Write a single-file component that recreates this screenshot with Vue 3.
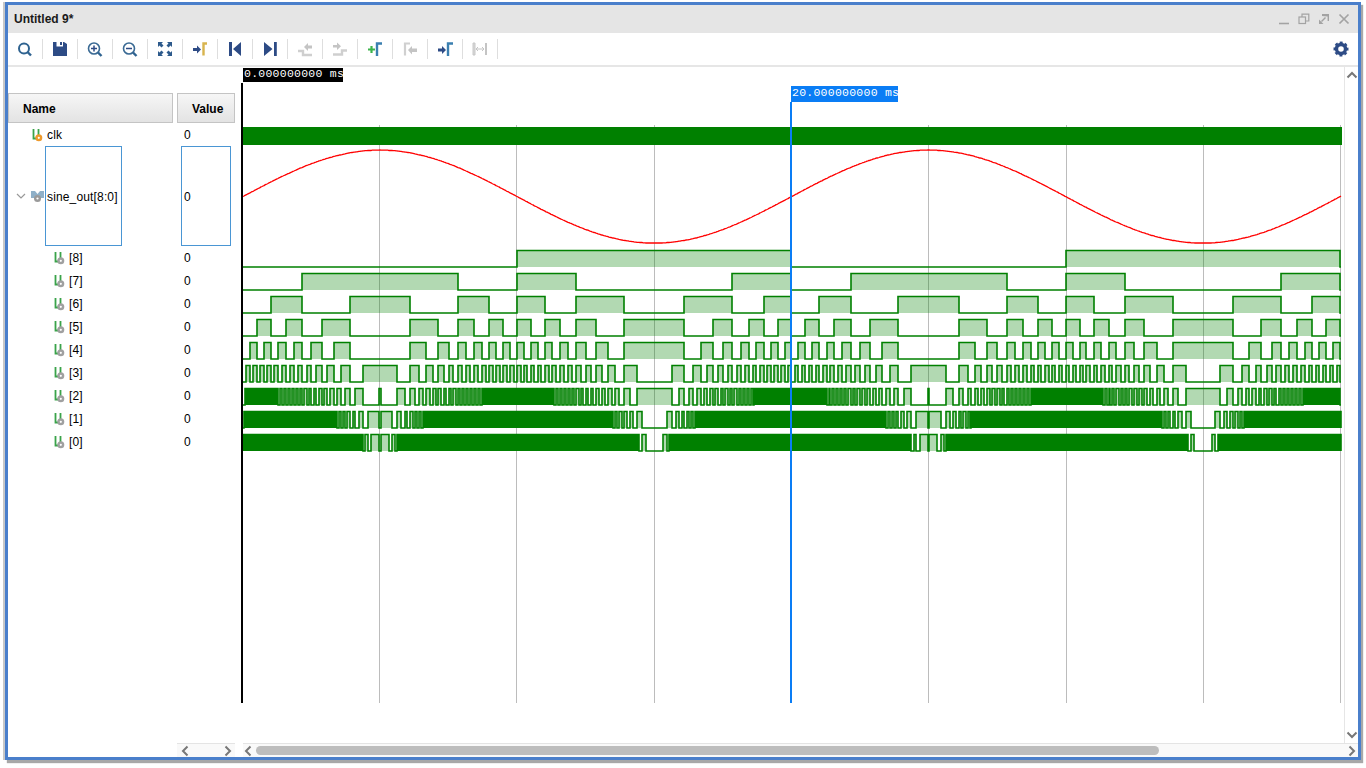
<script setup>
const X0 = 242.85
const XEND = 1341
const T = 548.6
const AMP = 204.01
const value = (x) => Math.max(-204, Math.floor(AMP * Math.sin((2 * Math.PI * (x - X0)) / T)))

const sinePoints = []
for (let x = 243; x <= XEND; x += 1) {
  sinePoints.push(`${x},${(196.5 - (value(x) / 204) * 46.5).toFixed(1)}`)
}
const sine = sinePoints.join(' ')

const bitIds = [8, 7, 6, 5, 4, 3, 2, 1, 0]

function intervals(bit) {
  const out = []
  let start = null
  for (let x = 243; x <= XEND; x += 0.02) {
    const on = ((value(x) >> bit) & 1) === 1
    if (on && start === null) start = x
    if (!on && start !== null) {
      out.push([start, x])
      start = null
    }
  }
  if (start !== null) out.push([start, XEND])
  return out
}

// Pulses narrower than the trace width fuse into a solid block, as the viewer draws them.
function merged(list, maxGap) {
  const runs = []
  for (const [a, b] of list) {
    const prev = runs[runs.length - 1]
    const narrow = b - a < 2.6 && prev && prev.lastWidth < 2.6
    if (prev && narrow && a - prev.b < maxGap) {
      prev.b = b
      prev.solid = true
      prev.lastWidth = b - a
    } else {
      runs.push({ a, b, solid: false, lastWidth: b - a })
    }
  }
  return runs
}

const traces = bitIds.map((bit, k) => {
  const top = 250.5 + 23 * k
  const bottom = 267 + 23 * k
  let line = `M243 ${bottom}`
  let fill = ''
  let solid = ''
  let cursor = 243
  for (const run of merged(intervals(bit), bit === 0 ? 2.1 : 1.85)) {
    const l = Math.max(Math.round(run.a), cursor)
    const r = Math.max(Math.round(run.b), l + 1)
    cursor = r
    line += `H${l}V${top}H${r}V${bottom}`
    const shape = `M${l} ${top}H${r}V${bottom}H${l}Z`
    if (run.solid) solid += shape
    else fill += shape
  }
  line += `H${XEND}`
  return { bit, line, fill, solid }
})

const gridLines = [379.5, 516.5, 654.5, 928.5, 1066.5, 1203.5, 1340.5]
const rows = bitIds.map((b) => `[${b}]`)
</script>

<template>
  <div class="screen">
    <div class="window">
      <header class="titlebar">
        <span class="title">Untitled 9*</span>
        <div class="winctl">
          <svg width="12" height="12" viewBox="0 0 12 12"><path d="M1 10.500h10" stroke="#a3a3a3" stroke-width="1.600" /></svg>
          <svg width="12" height="12" viewBox="0 0 12 12" fill="none" stroke="#a3a3a3" stroke-width="1.200"><rect x="1" y="4" width="6.500" height="6.500" /><path d="M4 4V1.200h6.800V8H7.500" /></svg>
          <svg width="12" height="12" viewBox="0 0 12 12" fill="#a3a3a3"><path d="M4 1h7v7L11 8 9.600 8V3.400L4 3z" /><path d="M1 11V6.500L5.500 11zM3 8l4-4 1 1-4 4z" /></svg>
          <svg width="12" height="12" viewBox="0 0 12 12"><path d="M1.500 1.500l9 9M10.500 1.500l-9 9" stroke="#a3a3a3" stroke-width="1.700" /></svg>
        </div>
      </header>

      <nav class="toolbar">
        <button class="tb"><svg viewBox="0 0 24 24"><circle cx="11" cy="11.500" r="5" fill="none" stroke="#2f6390" stroke-width="2" /><path d="M14.500 15l3.500 3.500" stroke="#2f6390" stroke-width="2.400" /></svg></button>
        <i class="sep"></i>
        <button class="tb"><svg viewBox="0 0 24 24"><path fill="#2d4b85" d="M5 5h3.500v4.500h6.500V5h1l3 2v12H5z" /><path fill="#2d4b85" d="M12 5h2v3h-2z" /></svg></button>
        <i class="sep"></i>
        <button class="tb"><svg viewBox="0 0 24 24"><circle cx="11" cy="11.500" r="5.500" fill="none" stroke="#3a6a94" stroke-width="1.600" /><path d="M15 15.500l3.500 3.500" stroke="#2f6390" stroke-width="2.400" /><path d="M8 11.500h6M11 8.500v6" stroke="#2d4b85" stroke-width="1.500" /></svg></button>
        <i class="sep"></i>
        <button class="tb"><svg viewBox="0 0 24 24"><circle cx="11" cy="11.500" r="5.500" fill="none" stroke="#3a6a94" stroke-width="1.600" /><path d="M15 15.500l3.500 3.500" stroke="#2f6390" stroke-width="2.400" /><path d="M8 11.500h6" stroke="#2d4b85" stroke-width="1.500" /></svg></button>
        <i class="sep"></i>
        <button class="tb"><svg viewBox="0 0 24 24" fill="#2d5a8c"><path d="M5 5h5L8.500 6.500l2 2-2 2-2-2L5 10zM19 5v5l-1.500-1.500-2 2-2-2 2-2L14 5zM5 19v-5l1.500 1.500 2-2 2 2-2 2L10 19zM19 19h-5l1.500-1.500-2-2 2-2 2 2L19 14z" /></svg></button>
        <i class="sep"></i>
        <button class="tb"><svg viewBox="0 0 24 24"><path fill="#2d4b85" d="M5 11h4V8.500l4 4-4 4V14H5z" /><path d="M15.500 18.500V6.500H19" fill="none" stroke="#d8b44e" stroke-width="2.400" /></svg></button>
        <i class="sep"></i>
        <button class="tb"><svg viewBox="0 0 24 24" fill="#2d4b85"><path d="M6 5h3v14H6zM18 5v14l-8-7z" /></svg></button>
        <i class="sep"></i>
        <button class="tb"><svg viewBox="0 0 24 24" fill="#2d4b85"><path d="M6 5l8.500 7L6 19zM16 5h2.800v14H16z" /></svg></button>
        <i class="sep"></i>
        <button class="tb"><svg viewBox="0 0 24 24"><path d="M5 14h5v4h9" fill="none" stroke="#cfcfcf" stroke-width="2.400" /><path d="M11 10l4-4v2.500h4v3h-4V14z" fill="#c4c4c4" /></svg></button>
        <i class="sep"></i>
        <button class="tb"><svg viewBox="0 0 24 24"><path d="M5 17.500h9v-4h5" fill="none" stroke="#cfcfcf" stroke-width="2.400" /><path d="M5 8h4V5.500l4 3.700-4 3.800V10.500H5z" fill="#c4c4c4" /></svg></button>
        <i class="sep"></i>
        <button class="tb"><svg viewBox="0 0 24 24"><path d="M5 12.500h7M8.500 9v7" stroke="#3cb44a" stroke-width="2.200" /><path d="M14 19V6.500h5" fill="none" stroke="#3a7fb0" stroke-width="2.400" /></svg></button>
        <i class="sep"></i>
        <button class="tb"><svg viewBox="0 0 24 24"><path d="M7 18.500V6.500h5" fill="none" stroke="#d0d0d0" stroke-width="2.200" /><path d="M10 13l4-4v2.500h5v3.500h-5v2.500z" fill="#c4c4c4" /></svg></button>
        <i class="sep"></i>
        <button class="tb"><svg viewBox="0 0 24 24"><path fill="#2d4b85" d="M5 11.500h4V9l4 4-4 4v-2.500H5z" /><path d="M15 19V6.500h5" fill="none" stroke="#3a7fb0" stroke-width="2.400" /></svg></button>
        <i class="sep"></i>
        <button class="tb"><svg viewBox="0 0 24 24"><path d="M5 6h2v12H5z" fill="#d8d8d8" stroke="#c8c8c8" /><path d="M17 6h2v12h-2z" fill="#c4c4c4" /><path d="M8 12h8M10 10l-2 2 2 2M14 10l2 2-2 2" fill="none" stroke="#c4c4c4" /></svg></button>
        <i class="sep"></i>
        <button class="tb gear"><svg viewBox="0 0 24 24"><circle cx="12" cy="12" r="4.500" fill="none" stroke="#2d4b85" stroke-width="3.400" /><circle cx="12" cy="12" r="6.600" fill="none" stroke="#2d4b85" stroke-width="1.800" stroke-dasharray="3 2.180" stroke-dashoffset="1.500" /></svg></button>
      </nav>

      <main class="main">
        <section class="left">
          <div class="heads">
            <div class="head name">Name</div>
            <div class="head val">Value</div>
          </div>
          <div class="row">
            <div class="namecell lvl1">
              <svg class="sig" viewBox="0 0 13 14"><path d="M1.500 1v9.500H4.500M6.500 1v6" fill="none" stroke="#3aa34a" stroke-width="1.800" /><circle cx="6.800" cy="9.800" r="3.500" fill="#ee9a2c" /><circle cx="6.800" cy="9.800" r="1.100" fill="#fff" /></svg>
              <span>clk</span>
            </div>
            <div class="valcell"><span>0</span></div>
          </div>
          <div class="row bus">
            <div class="namecell lvl0">
              <svg class="caret" viewBox="0 0 10 6"><path d="M1 1l4 4 4-4" fill="none" stroke="#999" stroke-width="1.200" /></svg>
              <svg class="sig" viewBox="0 0 13 14"><path d="M0 2h4l2.500 3L9 2h4v7H9L6.500 6 4 9H0z" fill="#8fb0c8" /><circle cx="6.500" cy="9.500" r="3.500" fill="#9a9a9a" /><circle cx="6.500" cy="9.500" r="1.100" fill="#fff" /></svg>
              <span class="box">sine_out[8:0]</span>
            </div>
            <div class="valcell"><span class="box vbox">0</span></div>
          </div>
          <div v-for="r in rows" :key="r" class="row">
            <div class="namecell lvl2">
              <svg class="sig" viewBox="0 0 13 14"><path d="M1.500 1v9.500H4.500M6.500 1v6" fill="none" stroke="#3aa34a" stroke-width="1.800" /><circle cx="6.800" cy="9.800" r="3.500" fill="#a0a0a0" /><circle cx="6.800" cy="9.800" r="1.100" fill="#fff" /></svg>
              <span>{{ r }}</span>
            </div>
            <div class="valcell"><span>0</span></div>
          </div>
        </section>

        <section class="wave">
          <svg class="plot" width="1103" height="676" viewBox="241 67 1103 676">
            <g stroke="#bcbcbc" stroke-width="1">
              <line v-for="g in gridLines" :key="g" :x1="g" :x2="g" y1="125" y2="703" />
            </g>
            <rect x="243" y="127" width="1099" height="18" fill="#008000" />
            <polyline :points="sine" fill="none" stroke="#ff0000" stroke-width="1.300" />
            <g v-for="t in traces" :key="t.bit">
              <path :d="t.fill" fill="#008000" fill-opacity="0.3" />
              <path :d="t.solid" fill="#008000" />
              <path :d="t.line" fill="none" stroke="#008000" stroke-width="1.600" />
            </g>
            <rect x="241" y="83" width="2" height="620" fill="#000" />
            <rect x="790" y="102" width="2" height="601" fill="#0a7df5" />
          </svg>
          <span class="stamp origin">0.000000000 ms</span>
          <span class="stamp cursor">20.000000000 ms</span>
        </section>

        <aside class="vscroll">
          <svg class="chev" viewBox="0 0 12 8"><path d="M1.500 6.500L6 2l4.500 4.500" /></svg>
          <svg class="chev" viewBox="0 0 12 8"><path d="M1.500 1.500L6 6l4.500-4.500" /></svg>
        </aside>
      </main>

      <footer class="hbar">
        <div class="hspacer"></div>
        <div class="hname">
          <svg class="chevh" viewBox="0 0 8 12"><path d="M6.500 1.500L2 6l4.500 4.500" /></svg>
          <svg class="chevh" viewBox="0 0 8 12"><path d="M1.500 1.500L6 6l-4.500 4.500" /></svg>
        </div>
        <div class="hgap"></div>
        <div class="hwave">
          <svg class="chevh" viewBox="0 0 8 12"><path d="M6.500 1.500L2 6l4.500 4.500" /></svg>
          <div class="track"><div class="thumb"></div></div>
          <svg class="chevh" viewBox="0 0 8 12"><path d="M1.500 1.500L6 6l-4.500 4.500" /></svg>
        </div>
      </footer>
    </div>
  </div>
</template>

<style scoped>
.screen {
  width: 1366px;
  height: 768px;
  box-sizing: border-box;
  padding: 2px 5px 8px 5px;
  background: #fff;
  overflow: hidden;
  font-family: "Liberation Sans", Arial, sans-serif;
  font-size: 12px;
  color: #000;
}
.window {
  height: 100%;
  box-sizing: border-box;
  border: 3px solid #4a7fcb;
  background: #fff;
  display: flex;
  flex-direction: column;
  box-shadow: 2px 3px 1px #a8a8a8, -2px 0 0 #c8c8c8;
}
.titlebar {
  height: 28px;
  flex: none;
  background: #e5e5e5;
  display: flex;
  align-items: center;
  justify-content: space-between;
  padding: 0 8px 0 6px;
  box-sizing: border-box;
}
.title {
  font-weight: bold;
  font-size: 12px;
  color: #1a1a1a;
}
.winctl {
  display: flex;
  gap: 8px;
}
.toolbar {
  height: 34px;
  flex: none;
  box-sizing: border-box;
  border-bottom: 2px solid #e6e6e6;
  display: flex;
  align-items: center;
}
.tb {
  width: 34px;
  height: 24px;
  padding: 0 5px;
  border: 0;
  background: none;
  display: block;
  box-sizing: border-box;
}
.tb svg {
  width: 24px;
  height: 24px;
  display: block;
}
.gear {
  margin-left: auto;
  margin-right: 0;
}
.sep {
  width: 1px;
  height: 20px;
  background: #dedede;
  flex: none;
}
.main {
  height: 676px;
  flex: none;
  display: flex;
}
.left {
  width: 233px;
  flex: none;
  padding-top: 26px;
  box-sizing: border-box;
}
.heads {
  display: flex;
  gap: 4px;
  height: 30px;
}
.head {
  box-sizing: border-box;
  border: 1px solid #c4c4c4;
  background: linear-gradient(#f6f6f6, #e3e3e3);
  font-weight: bold;
  display: flex;
  align-items: center;
  padding-top: 2px;
}
.name {
  width: 165px;
  padding-left: 14px;
}
.val {
  width: 58px;
  padding-left: 14px;
}
.row {
  height: 23px;
  display: flex;
  align-items: center;
  letter-spacing: 0.15px;
}
.row.bus {
  height: 100.500px;
}
.namecell {
  width: 169px;
  flex: none;
  height: 100%;
  display: flex;
  align-items: center;
  box-sizing: border-box;
}
.lvl0 {
  padding-left: 8px;
}
.lvl1 {
  padding-left: 24px;
}
.lvl2 {
  padding-left: 46px;
}
.sig {
  width: 13px;
  height: 14px;
  flex: none;
  margin-right: 2px;
}
.caret {
  width: 10px;
  height: 6px;
  margin-right: 5px;
  flex: none;
}
.lvl0 .sig {
  margin-right: 1px;
}
.valcell {
  padding-left: 7px;
  height: 100%;
  display: flex;
  align-items: center;
}
.box {
  height: 100px;
  box-sizing: border-box;
  border: 1px solid #4a96d4;
  display: flex;
  align-items: center;
  padding: 1px 0 0 1px;
  width: 77px;
}
.vbox {
  width: 50px;
  margin-left: -3px;
  padding-left: 2px;
}
.wave {
  flex: 1;
  position: relative;
  min-width: 0;
}
.plot {
  display: block;
}
.stamp {
  position: absolute;
  font-family: "Liberation Mono", monospace;
  font-size: 11.5px;
  letter-spacing: 0.25px;
  color: #fff;
  white-space: nowrap;
  padding: 0 1px;
  box-sizing: border-box;
}
.origin {
  left: 2px;
  top: 1px;
  width: 100px;
  height: 14px;
  line-height: 12px;
  background: #000;
}
.cursor {
  left: 550px;
  top: 19px;
  width: 107px;
  height: 16px;
  line-height: 13px;
  background: #0a7df5;
}
.vscroll {
  width: 14px;
  flex: none;
  box-sizing: border-box;
  border-left: 1px solid #e6e6e6;
  display: flex;
  flex-direction: column;
  justify-content: space-between;
  align-items: center;
  padding: 4px 0;
}
.chev {
  width: 12px;
  height: 8px;
  fill: none;
  stroke: #777;
  stroke-width: 2;
}
.hbar {
  height: 14px;
  flex: none;
  display: flex;
}
.hspacer {
  width: 169px;
  flex: none;
}
.hname,
.hwave {
  box-sizing: border-box;
  background: #f9f9f9;
  border-top: 1px solid #e4e4e4;
  display: flex;
  align-items: center;
}
.hname {
  width: 58px;
  flex: none;
  justify-content: space-between;
  padding: 0 3px 0 4px;
}
.hgap {
  width: 8px;
  flex: none;
}
.hwave {
  flex: 1;
  padding: 0 2px 0 1px;
}
.chevh {
  width: 8px;
  height: 12px;
  flex: none;
  fill: none;
  stroke: #777;
  stroke-width: 2;
}
.track {
  flex: 1;
  padding-left: 4px;
}
.thumb {
  width: 903px;
  height: 9px;
  border-radius: 5px;
  background: #bdbdbd;
}
</style>
